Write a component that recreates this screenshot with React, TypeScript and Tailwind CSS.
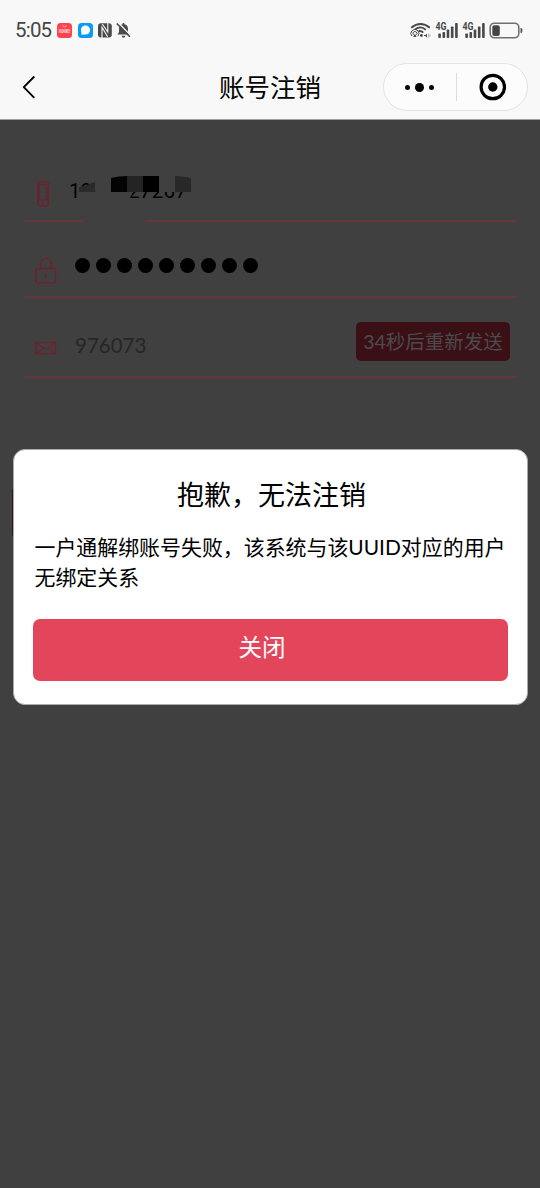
import type { ReactNode } from "react";

// ── Status bar ───────────────────────────────────────────────────────

function SignalIcon() {
  return (
    <svg width="24" height="18" viewBox="0 0 24 18" fill="#484848">
      <text x="0.4" y="8.5" fontSize="10" fontWeight="700" textLength="11" lengthAdjust="spacingAndGlyphs" fontFamily="Roboto, sans-serif">
        4G
      </text>
      <rect x="3.3" y="12.5" width="2.6" height="4.5" rx="0.8" />
      <rect x="7.5" y="11" width="2.6" height="6" rx="0.8" />
      <rect x="11.7" y="8.5" width="2.6" height="8.5" rx="0.8" />
      <rect x="15.9" y="5.5" width="2.6" height="11.5" rx="0.8" />
      <rect x="20.1" y="2" width="2.6" height="15" rx="0.8" />
    </svg>
  );
}

function StatusBar() {
  return (
    <div className="flex h-[60px] items-center justify-between pl-[15px] pr-[17px]">
      <div className="flex items-center">
        <span className="w-[42px] font-[Roboto] text-[20.5px] leading-6 tracking-[-0.8px] text-[#454545]">5:05</span>
        <svg className="-mt-px" width="74" height="18" viewBox="0 0 74 18">
          <rect x="0" y="2" width="15" height="15" rx="3.5" fill="#fb4450" />
          <path d="M5.5 4.5q2 3 4 0" stroke="#ffb9b9" fill="none" />
          <text x="1.8" y="12" fontSize="4.5" fontWeight="700" fill="#ffe5e5" textLength="11.5" lengthAdjust="spacingAndGlyphs">
            HUAWEI
          </text>
          <rect x="21" y="2" width="15" height="15" rx="3.5" fill="#0b9bf5" />
          <circle cx="28.5" cy="9" r="4.6" fill="#fff" />
          <path d="M24.5 10v4l4-1z" fill="#fff" />
          <rect x="41" y="2.3" width="13.8" height="14.2" rx="3" fill="#4a4a4a" />
          <path d="M45 17V6.2l5.6 9.6M45.300 3l5.500 8V2" stroke="#f8f8f8" strokeWidth="1.1" fill="none" />
          <path d="M60.300 13.500Q62 12 62 10.500V8q0-4 3.700-4.700V2h1.600v1.300Q71 4 71 8v2.500q0 1.500 1.700 3z" fill="#4a4a4a" />
          <path d="M64.500 14.800h4q-.4 1.900-2 1.900t-2-1.900z" fill="#4a4a4a" />
          <path d="M61 1.500l13 13.300" stroke="#f8f8f8" strokeWidth="1.3" />
          <path d="M59.800 2.500l13 13.300" stroke="#4a4a4a" strokeWidth="1.6" />
        </svg>
      </div>
      <div className="-mt-px flex items-center">
        <svg className="mr-[4px]" width="21" height="18" viewBox="0 0 21 18" fill="none" stroke="#484848">
          <path d="M1.200 6.700Q10.500-.8 19.800 6.700" strokeWidth="2" />
          <path d="M5.300 8.200q5.200-4 10.500.5" strokeWidth="1.8" />
          <path d="M8.500 10.200q2.600-.8 4.800 1.500" strokeWidth="1.8" />
          <path d="M2 15.200A4 4 0 1 1 7.800 15.200M3.300 13.700a2 2 0 1 1 3.200 0" strokeWidth="1" />
          <path d="M4.900 12.500l-1.600 3.600h3.200z" fill="#484848" stroke="none" />
          <circle cx="11.4" cy="14.5" r="1.4" fill="#484848" stroke="none" />
          <path d="M14 14h1.500l1.500-1.300v4L15.500 15H14z" fill="#484848" stroke="none" />
          <path d="M18.500 12.500v4M20 13v3" stroke="#aaa" strokeWidth=".8" />
        </svg>
        <div className="mr-[3px]">
          <SignalIcon />
        </div>
        <SignalIcon />
        <svg className="ml-[3px]" width="34" height="18" viewBox="0 0 34 18">
          <rect x="1.2" y="2.2" width="28.6" height="14.6" rx="4.2" fill="none" stroke="#707070" strokeWidth="1.6" />
          <rect x="3.3" y="4.3" width="7.5" height="10.6" rx="2" fill="#454545" />
          <path d="M31.500 7q1.800 0 1.800 1.200v2.600q0 1.200-1.800 1.200z" fill="#555" />
        </svg>
      </div>
    </div>
  );
}

// ── Navigation bar ───────────────────────────────────────────────────

function NavBar() {
  return (
    <div className="grid h-[59px] grid-cols-[1fr_auto_1fr] items-start pl-[21px] pr-[12px] pt-[3px]">
      <svg className="mt-[12px]" width="16" height="24" viewBox="0 0 16 24" fill="none" stroke="#000" strokeWidth="1.9">
        <path d="M13.300 1.500L2.800 12.200l10.500 10.600" strokeLinejoin="round" />
      </svg>
      <h1 className="-ml-[9px] mt-[5px] text-[25.5px] leading-[36px]">账号注销</h1>
      <div className="flex h-[48px] w-[145px] items-center justify-self-end rounded-full border border-[#e3e3e3] bg-[#fcfcfc]">
        <div className="flex flex-1 items-center justify-center gap-[5px] pr-px">
          <span className="size-[5px] rounded-full bg-black" />
          <span className="size-[9px] rounded-full bg-black" />
          <span className="size-[5px] rounded-full bg-black" />
        </div>
        <span className="h-[28px] w-px bg-[#dcdcdc]" />
        <div className="flex flex-1 items-center justify-center">
          <svg width="28" height="28" viewBox="0 0 28 28">
            <circle cx="14.8" cy="14" r="11.7" fill="none" stroke="#000" strokeWidth="3.2" />
            <circle cx="14.8" cy="14" r="4.7" />
          </svg>
        </div>
      </div>
    </div>
  );
}

// ── Form ─────────────────────────────────────────────────────────────

function Field({ className, children }: { className: string; children: ReactNode }) {
  return <div className={`relative flex items-start border-b-2 border-[#65363b] ${className}`}>{children}</div>;
}

function Form() {
  return (
    <div className="flex flex-col px-6">
      <Field className="h-[102px] pl-[12px]">
        <svg className="mt-[60px]" width="14" height="28" viewBox="0 0 14 28" fill="none" stroke="#6b222d">
          <rect x="1.8" y="1.8" width="10.4" height="24" rx="1.6" strokeWidth="1.6" />
          <rect x="3.5" y="4.5" width="7" height="15.5" strokeWidth="1.1" />
          <circle cx="7" cy="22.7" r="1" strokeWidth="1" />
        </svg>
        <span className="ml-[19px] mt-[56px] font-[Roboto] text-[20.5px] leading-[30px]">19</span>
        <span className="ml-[36px] mt-[56px] font-[Roboto] text-[20.5px] leading-[30px] tracking-[0.3px]">27267</span>
        {/* masked part of the number */}
        <svg className="absolute left-[54px] top-[50px]" width="120" height="56" viewBox="78 170 120 56">
          <path d="M78 190h20v12h-20zM121 176h75v16h-63l-3 6h-9zM83 219h66l-6 3H83z" fill="#404040" />
          <path d="M79 192v-5l8-2 8-3v10z" fill="#2a2a2a" />
          <path d="M111 192v-14q8-2 16-2v16z" fill="#030303" />
          <path d="M127 176h16v16h-16z" fill="#242424" />
          <path d="M143 176h16v16h-16z" fill="#000" />
          <path d="M175 176q8 0 16 2v14h-16z" fill="#282828" />
        </svg>
      </Field>

      <Field className="h-[76px] pl-[11px]">
        <svg className="mt-[35px]" width="22" height="28" viewBox="0 0 22 28" fill="none" stroke="#6b222d" strokeWidth="1.5">
          <rect x="1" y="11.6" width="19.5" height="14.2" rx="1" />
          <path d="M5.700 11.500V7Q5.700 1.500 11 1.500T16.200 7v4.500M10.700 16.500v4.500" />
        </svg>
        <div className="ml-[18px] mt-[36px] flex gap-[6px]">
          {Array.from({ length: 9 }, (_, i) => (
            <span key={i} className="size-[15px] rounded-full bg-black" />
          ))}
        </div>
      </Field>

      <Field className="h-[80px] pl-[11px]">
        <svg className="mt-[43px]" width="22" height="14" viewBox="0 0 22 14" fill="none" stroke="#6b222d" strokeWidth="1.3">
          <rect x="1" y="1.5" width="19.5" height="11" />
          <path d="M1 1.500l7.500 5.800q2.200 1.300 4.500 0l7.500-5.800M1 12.500l7-5M20.500 12.500l-7-5" />
        </svg>
        <span className="ml-[18px] mt-[32px] font-[Lato] text-[20.5px] leading-[30px] text-[#262626]">976073</span>
        <button className="absolute right-[6px] top-[24px] h-[39px] w-[154px] whitespace-nowrap rounded-[5px] bg-[#3a1016] font-[Lato,'Noto_Sans_CJK_SC',sans-serif] text-[19.5px] leading-[36px] text-[#4b4b4b]">
          34秒后重新发送
        </button>
      </Field>
    </div>
  );
}

// ── Dialog ───────────────────────────────────────────────────────────

function Dialog() {
  return (
    <div className="absolute left-[13px] top-[449px] flex h-[256px] w-[515px] flex-col rounded-[12px] border border-[#aaa] bg-white pl-[19px] pr-[19px]">
      <h2 className="mt-[24px] pl-[2px] text-center text-[27px] leading-[40px]">抱歉，无法注销</h2>
      <p className="ml-[1.5px] mt-[18px] whitespace-nowrap font-[Lato,'Noto_Sans_CJK_SC',sans-serif] text-[20.93px] leading-[30px]">
        一户通解绑账号失败，该系统与该UUID对应的用户
        <br />
        无绑定关系
      </p>
      <button className="mt-[27px] h-[62px] rounded-[7px] bg-[#e3465a] pb-[7px] pr-[17px] text-[23.5px] leading-[55px] text-white">
        关闭
      </button>
    </div>
  );
}

export default function App() {
  return (
    <div className="relative h-[1188px] w-[540px] overflow-hidden bg-[#404040] font-['Noto_Sans_CJK_SC',sans-serif] text-black">
      <header className="h-[120px] border-b border-[#a0a0a0] bg-[#f8f8f8]">
        <StatusBar />
        <NavBar />
      </header>
      <Form />
      {/* edge of the submit button behind the dialog */}
      <span className="absolute left-[12px] top-[486px] h-[53px] w-[20px] rounded-[5px] bg-[#3a1016]" />
      <Dialog />
    </div>
  );
}
